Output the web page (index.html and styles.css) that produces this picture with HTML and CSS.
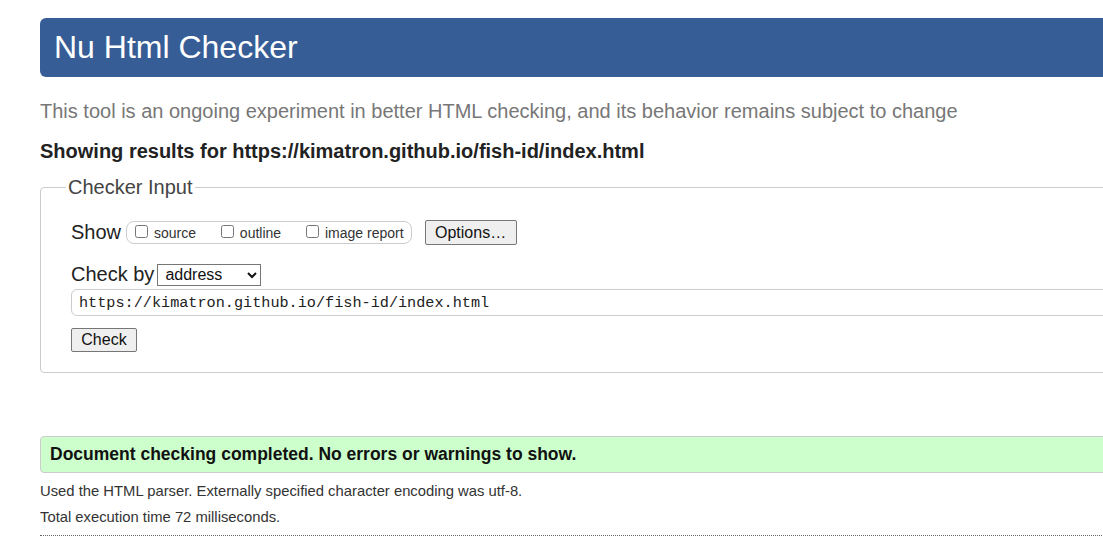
FILE: index.html
```html
<!DOCTYPE html>
<html lang="en">
<head>
<meta charset="utf-8">
<title>Nu Html Checker</title>
<link rel="stylesheet" href="styles.css">
</head>
<body>
<div class="page">
  <h1 class="masthead">Nu Html Checker</h1>
  <p class="tagline">This tool is an ongoing experiment in better HTML checking, and its behavior remains subject to change</p>
  <p class="showing">Showing results for https://kimatron.github.io/fish-id/index.html</p>
  <form class="input-form">
    <fieldset class="checker-input">
      <legend class="legend">Checker Input</legend>
      <div class="show-row">
        <span class="row-label">Show</span>
        <span class="show-group">
          <label class="opt"><input type="checkbox" class="cb"> source</label>
          <label class="opt"><input type="checkbox" class="cb"> outline</label>
          <label class="opt opt-last"><input type="checkbox" class="cb"> image report</label>
        </span>
        <button type="button" class="btn btn-options">Options…</button>
      </div>
      <div class="checkby-row">
        <span class="row-label">Check by</span>
        <select class="select">
          <option>address</option>
        </select>
      </div>
      <input type="text" class="url" value="https://kimatron.github.io/fish-id/index.html">
      <div class="submit-row">
        <button type="button" class="btn btn-check">Check</button>
      </div>
    </fieldset>
  </form>
  <div class="success">Document checking completed. No errors or warnings to show.</div>
  <p class="details">Used the HTML parser. Externally specified character encoding was utf-8.</p>
  <p class="details details-time">Total execution time 72 milliseconds.</p>
  <hr class="dotted">
</div>
</body>
</html>
```

FILE: styles.css
```css
html, body {
  margin: 0;
  padding: 0;
  background: #fff;
  overflow: hidden;
}

body {
  font-family: "Liberation Sans", Arial, sans-serif;
  color: #222;
}

.page {
  padding: 18px 0 0 40px;
  width: 1140px;
}

.masthead {
  margin: 0;
  height: 59px;
  line-height: 59px;
  padding-left: 14px;
  background: #365d95;
  color: #fff;
  font-size: 32px;
  font-weight: normal;
  border-radius: 6px 0 0 6px;
}

.tagline {
  margin: 22px 0 0;
  font-size: 20px;
  line-height: 24px;
  color: #777;
}

.showing {
  margin: 16px 0 0;
  font-size: 20px;
  line-height: 24px;
  font-weight: bold;
  color: #222;
}

.input-form {
  margin: 12px 0 0;
}

.checker-input {
  margin: 0;
  padding: 0 30px 20px 30px;
  border: 1px solid #ccc;
  border-radius: 4px;
  min-width: 0;
}

.legend {
  margin-left: -5px;
  padding: 0 2px;
  font-size: 20px;
  line-height: 24px;
  color: #444;
}

.row-label {
  font-size: 20px;
  line-height: 23px;
  color: #222;
}

.show-row {
  display: flex;
  align-items: center;
  margin-top: 21px;
  height: 25px;
}

.show-group {
  display: flex;
  align-items: center;
  margin-left: 5px;
  height: 21px;
  padding: 0 7px 0 5px;
  border: 1px solid #ccc;
  border-radius: 8px;
}

.opt {
  display: flex;
  align-items: center;
  font-size: 14px;
  color: #333;
  margin-right: 22px;
  white-space: pre;
}

.opt-last {
  margin-right: 0;
}

.cb {
  margin: 0 2px 2px 3px;
  width: 13px;
  height: 13px;
}

.btn {
  font-family: "Liberation Sans", Arial, sans-serif;
  font-size: 16px;
  color: #111;
  background: #efefef;
  border: 1px solid #767676;
  border-radius: 2px;
  padding: 0;
}

.btn-options {
  margin-left: 13px;
  width: 92px;
  height: 25px;
}

.checkby-row {
  display: flex;
  align-items: center;
  margin-top: 18px;
  height: 23px;
}

.select {
  margin-left: 3px;
  width: 104px;
  height: 22px;
  font-family: "Liberation Sans", Arial, sans-serif;
  font-size: 16px;
  color: #111;
  border: 1px solid #767676;
  border-radius: 0;
  background: #fff;
  padding: 0 0 0 3px;
}

.url {
  display: block;
  box-sizing: border-box;
  margin-top: 3px;
  width: 1100px;
  height: 27px;
  padding: 0 7px;
  font-family: "Liberation Mono", "DejaVu Sans Mono", monospace;
  font-size: 15.2px;
  color: #222;
  border: 1px solid #ccc;
  border-radius: 6px;
  outline: none;
}

.submit-row {
  margin-top: 12px;
  display: flex;
}

.btn-check {
  width: 66px;
  height: 24px;
}

.success {
  margin-top: 63px;
  box-sizing: border-box;
  height: 37px;
  line-height: 35px;
  padding-left: 9px;
  background: #ccffcc;
  border: 1px solid #ccc;
  border-radius: 4px;
  font-size: 17.5px;
  font-weight: bold;
  color: #111;
}

.details {
  margin: 10px 0 0;
  font-size: 14.8px;
  line-height: 17px;
  color: #333;
}

.details-time {
  margin-top: 9px;
}

.dotted {
  margin: 9px 0 0;
  border: 0;
  border-top: 1px dotted #666;
  height: 0;
}
```
